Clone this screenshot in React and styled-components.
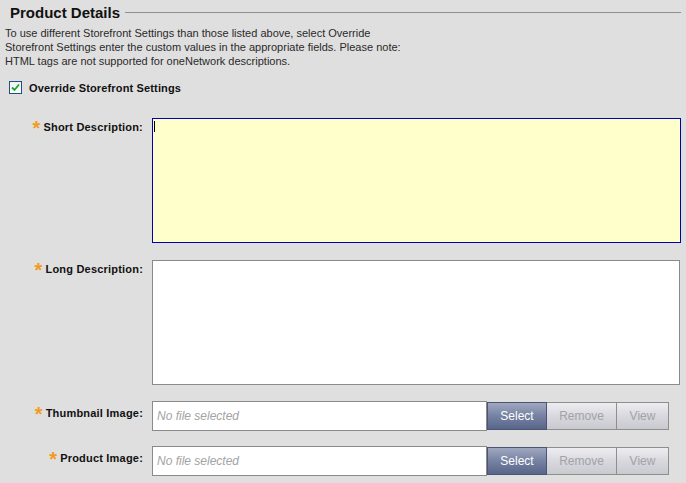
import React from "react";
import styled, { createGlobalStyle } from "styled-components";

const Global = createGlobalStyle`
  html, body { margin: 0; padding: 0; background: #dfdfdf; }
  body { font-family: "Liberation Sans", Arial, sans-serif; color: #222; }
`;

const Page = styled.div`
  width: 686px;
  height: 483px;
  overflow: hidden;
  background: #dfdfdf;
  padding: 4px 5px 0 5px;
  box-sizing: border-box;
`;

const Legend = styled.div`
  display: flex;
  align-items: center;
  gap: 5px;
  padding-left: 5px;
  height: 17px;
`;

const Title = styled.h2`
  margin: 0;
  font-size: 15px;
  font-weight: bold;
  color: #111;
  white-space: nowrap;
`;

const Rule = styled.div`
  flex: 1;
  height: 1px;
  background: #8f8f8f;
`;

const Intro = styled.p`
  margin: 5px 0 0 0;
  font-size: 11px;
  line-height: 14px;
  color: #2a2a2a;
`;

const CheckRow = styled.label`
  display: flex;
  align-items: center;
  gap: 7px;
  margin: 13px 0 0 4px;
  font-size: 11px;
  font-weight: bold;
  letter-spacing: 0.15px;
  color: #111;
`;

const Box = styled.span`
  width: 11px;
  height: 11px;
  border: 1px solid #1c5180;
  background: linear-gradient(#f0f0f0, #ffffff);
  display: flex;
  align-items: center;
  justify-content: center;
`;

const Form = styled.div`
  display: flex;
  flex-direction: column;
  margin-top: 24px;
`;

const Row = styled.div`
  display: flex;
  align-items: flex-start;
  margin-bottom: ${(p) => p.$gap}px;
`;

const Label = styled.div`
  width: 138px;
  padding-right: 9px;
  display: flex;
  justify-content: flex-end;
  align-items: flex-start;
  gap: 3px;
  font-size: 11px;
  font-weight: bold;
  letter-spacing: 0.2px;
  color: #111;
  padding-top: ${(p) => p.$top}px;
  white-space: nowrap;
`;

const Star = styled.span`
  color: #f39a1e;
  font-size: 20px;
  line-height: 14px;
  font-weight: bold;
  height: 10px;
  overflow: visible;
`;

const AreaWrap = styled.div`
  position: relative;
`;

const Area = styled.textarea`
  display: block;
  box-sizing: border-box;
  width: ${(p) => p.$w}px;
  height: 125px;
  margin: 0;
  resize: none;
  outline: none;
  background: ${(p) => (p.$active ? "#ffffcc" : "#ffffff")};
  border: 1px solid ${(p) => (p.$active ? "#0000b4" : "#8a8a8a")};
`;

const Caret = styled.span`
  position: absolute;
  left: 2px;
  top: 3px;
  width: 1px;
  height: 11px;
  background: #000;
`;

const FileField = styled.div`
  display: flex;
  align-items: center;
`;

const FileInput = styled.div`
  box-sizing: border-box;
  width: 335px;
  height: 30px;
  background: #fff;
  border: 1px solid #8a8a8a;
  display: flex;
  align-items: center;
  padding-left: 4px;
  font-size: 12px;
  font-style: italic;
  color: #a3a3a3;
`;

const Btn = styled.button`
  box-sizing: border-box;
  height: 28px;
  width: ${(p) => p.$w}px;
  margin: 0;
  padding: 0;
  font-family: "Liberation Sans", Arial, sans-serif;
  font-size: 12px;
  border: 1px solid ${(p) => (p.$primary ? "#4b5573" : "#8e8e8e")};
  color: ${(p) => (p.$primary ? "#ffffff" : "#a2a2a8")};
  background: ${(p) =>
    p.$primary
      ? "linear-gradient(#a0a8c0, #7682a2 50%, #58658a)"
      : "linear-gradient(#ededf1, #d8d8de 50%, #c9c9d0)"};
  border-left-width: ${(p) => (p.$first ? 1 : 0)}px;
`;

function Asterisk() {
  return <Star>*</Star>;
}

function FileRow({ label, gap }) {
  return (
    <Row $gap={gap}>
      <Label $top={6}>
        <Asterisk />
        <span>{label}</span>
      </Label>
      <FileField>
        <FileInput>No file selected</FileInput>
        <Btn $primary $first $w={60}>Select</Btn>
        <Btn $w={70}>Remove</Btn>
        <Btn $w={52}>View</Btn>
      </FileField>
    </Row>
  );
}

export default function App() {
  return (
    <Page>
      <Global />
      <Legend>
        <Title>Product Details</Title>
        <Rule />
      </Legend>
      <Intro>
        To use different Storefront Settings than those listed above, select Override
        <br />
        Storefront Settings enter the custom values in the appropriate fields. Please note:
        <br />
        HTML tags are not supported for oneNetwork descriptions.
      </Intro>
      <CheckRow>
        <Box>
          <svg width="9" height="9" viewBox="0 0 9 9">
            <path d="M1 4.5 L3.5 7 L8 1.5" fill="none" stroke="#1aa32c" strokeWidth="1.8" />
          </svg>
        </Box>
        Override Storefront Settings
      </CheckRow>
      <Form>
        <Row $gap={17}>
          <Label $top={3}>
            <Asterisk />
            <span>Short Description:</span>
          </Label>
          <AreaWrap>
            <Area $active $w={529} readOnly />
            <Caret />
          </AreaWrap>
        </Row>
        <Row $gap={16}>
          <Label $top={3}>
            <Asterisk />
            <span>Long Description:</span>
          </Label>
          <Area $w={528} readOnly />
        </Row>
        <FileRow label="Thumbnail Image:" gap={15} />
        <FileRow label="Product Image:" gap={0} />
      </Form>
    </Page>
  );
}
